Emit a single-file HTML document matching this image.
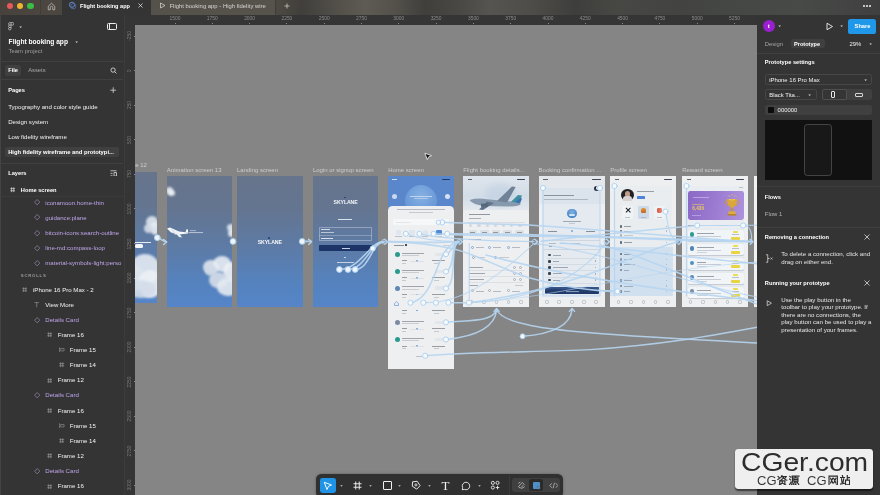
<!DOCTYPE html>
<html>
<head>
<meta charset="utf-8">
<title>Flight booking app</title>
<style>
*{box-sizing:border-box;margin:0;padding:0}
html,body{width:880px;height:495px;overflow:hidden;background:#858585}
body{font-family:"Liberation Sans",sans-serif;font-size:6.1px;color:#fff;position:relative;-webkit-font-smoothing:antialiased}
.abs{position:absolute}
.t{position:absolute;white-space:nowrap;line-height:8px;height:8px;margin-top:-4px;color:#f2f2f2}
.b{font-weight:700;font-size:5.7px;color:#fff}
.g{color:#a8a8a8}
.p{color:#bfa6ec}
#titlebar{left:0;top:0;width:880px;height:14.5px;background:linear-gradient(90deg,#48423c 0px,#4b4640 45px,#4c4842 280px,#413f3b 302px,#54514b 340px,#5e5b54 365px,#54514b 395px,#403f3c 425px,#4a4844 460px,#565450 489px,#4e4d49 530px,#3e3e3c 575px,#474744 616px,#434442 680px,#454745 728px,#484a48 799px,#3f3f3f 880px)}
#lpanel{left:0;top:14.5px;width:124px;height:481px;background:#343434;border-left:1px solid #444}
#rpanel{left:756.6px;top:14.5px;width:123.5px;height:481px;background:#343434}
#hruler{left:124px;top:14.5px;width:633px;height:10px;background:#353535}
#vruler{left:124px;top:14.5px;width:11px;height:481px;background:#353535;border-left:1px solid #3c3c3c}
.sep{position:absolute;height:1px;background:#404040}
.rt{position:absolute;top:15.9px;width:30px;margin-left:-15px;text-align:center;font-size:4.9px;line-height:6px;color:#8c8c8c}
.rk{position:absolute;top:23.2px;width:1px;height:1.3px;background:#8c8c8c;margin-left:-.5px}
.vt{position:absolute;left:125px;width:10px;height:30px;margin-top:-15px}
.vt span{position:absolute;left:5px;top:15px;font-size:4.9px;line-height:6px;color:#7a7a7a;transform:translate(-50%,-50%) rotate(-90deg);white-space:nowrap}
</style>
</head>
<body>
<div id="root" style="position:absolute;left:0;top:0;width:880px;height:495px;overflow:hidden;will-change:transform">
<!-- ======= CANVAS ======= -->
<div id="canvas" class="abs" style="left:135px;top:24.5px;width:622px;height:471px;background:#858585;overflow:hidden">
<div class="abs" style="left:-135px;top:-24.5px;width:880px;height:495px">
<style>
.fl{position:absolute;white-space:nowrap;font-size:6px;line-height:8px;height:8px;margin-top:-4px;color:#cdcdcd}
.fr{position:absolute;overflow:hidden}
.sky{background:linear-gradient(180deg,#67748c 0%,#647590 25%,#5d7ba6 55%,#5582bd 80%,#5585c8 100%)}
.app{background:#eeeff1}
.cl{position:absolute;border-radius:50%;background:#e3e9f1;filter:blur(.8px);opacity:.9}
.ln{position:absolute;height:.8px;background:#9aa0a8;opacity:.6}
.dot{position:absolute;border-radius:50%}
</style>
<div class="fl" style="left:135.2px;top:165px">e 12</div>
<div class="fl" style="left:166.8px;top:169.6px">Animation screen 13</div>
<div class="fl" style="left:237px;top:169.6px">Landing screen</div>
<div class="fl" style="left:312.9px;top:169.6px">Login or signup screen</div>
<div class="fl" style="left:388.2px;top:169.6px">Home screen</div>
<div class="fl" style="left:463.3px;top:169.6px">Flight booking details...</div>
<div class="fl" style="left:538.6px;top:169.6px">Booking confirmation ...</div>
<div class="fl" style="left:610.2px;top:169.6px">Profile screen</div>
<div class="fl" style="left:682.2px;top:169.6px">Reward screen</div>
<div class="fr sky" style="left:100px;top:172px;width:57px;height:130.5px">
<div class="cl" style="left:46px;top:44px;width:12px;height:12px;background:#dfe6ef"></div><div class="cl" style="left:50px;top:50px;width:10px;height:13px;background:#e6ecf3"></div><div class="cl" style="left:44px;top:52px;width:9px;height:9px;background:#d5deea"></div><div class="cl" style="left:30px;top:82px;width:30px;height:30px;background:#e4eaf2"></div><div class="cl" style="left:20px;top:92px;width:24px;height:28px;background:#dde5ee"></div><div class="cl" style="left:38px;top:98px;width:24px;height:28px;background:#edf1f6"></div><div class="cl" style="left:26px;top:108px;width:30px;height:18px;background:#d3dde9"></div>
<div class="abs" style="left:35px;top:69.6px;width:16px;height:.8px;background:#e8edf3"></div>
<div class="abs" style="left:35px;top:72px;width:8px;height:3.6px;border-radius:1.5px;background:#f4f6f9"></div>
</div>
<div class="fr sky" style="left:166.8px;top:176px;width:65.7px;height:131px">
<div class="cl" style="left:-1px;top:11px;width:7px;height:7px;background:#e4eaf2"></div><div class="cl" style="left:1px;top:13.5px;width:7px;height:6px;background:#eef2f6"></div><div class="cl" style="left:60px;top:48px;width:8px;height:7px;background:#e0e7f0"></div><div class="cl" style="left:61.5px;top:53px;width:7px;height:8px;background:#e9eef4"></div><div class="cl" style="left:36px;top:84px;width:16px;height:14px;background:#dfe6ef"></div><div class="cl" style="left:46px;top:80px;width:18px;height:16px;background:#e6ecf3"></div><div class="cl" style="left:56px;top:86px;width:16px;height:20px;background:#edf1f6"></div><div class="cl" style="left:42px;top:96px;width:18px;height:16px;background:#d6dfea"></div><div class="cl" style="left:50px;top:102px;width:22px;height:18px;background:#e5ebf2"></div><div class="cl" style="left:38px;top:90px;width:12px;height:10px;background:#cfd9e6"></div>
<svg class="abs" style="left:0;top:49px" width="40" height="14" viewBox="0 0 40 14"><path d="M0 3.5 L3 2.6 L12 6.4 L21 7.4 L21 8.6 L12 9.6 L4 7.4 Z" fill="#f7f8fa"/><path d="M6 5 L12 12 L15 12.4 L11 6.6 Z" fill="#eef1f5"/><path d="M3 4 L8 9.6 L10 9.8 L6.5 5 Z" fill="#dfe5ec"/><path d="M18.5 7.2 L19.5 4.2 L21 4.4 L21 7.6 Z" fill="#f7f8fa"/><path d="M21.5 7.6 H36" stroke="#e4e9f0" stroke-width=".7"/><path d="M23 5.6 H29" stroke="#d7dee8" stroke-width=".6"/></svg>
</div>
<div class="fr sky" style="left:237px;top:176px;width:65.5px;height:131px">
<div class="abs" style="left:0;width:65.5px;top:63.2px;text-align:center;font-size:5.2px;line-height:6px;font-weight:700;color:#f4f6fa;letter-spacing:-.1px">SKYLANE</div>
<div class="abs" style="left:31.2px;top:61.4px;width:1.6px;height:1.6px;border-radius:50%;background:#27407a"></div>
</div>
<div class="fr sky" style="left:312.9px;top:176px;width:65.4px;height:131px">
<div class="abs" style="left:0;width:65.4px;top:22.6px;text-align:center;font-size:5.2px;line-height:6px;font-weight:700;color:#f4f6fa;letter-spacing:-.1px">SKYLANE</div>
<div class="abs" style="left:31.6px;top:20.6px;width:1.6px;height:1.6px;border-radius:50%;background:#27407a"></div>
<div class="abs" style="left:25.5px;top:43px;width:14px;height:1px;background:#e8ecf3;opacity:.9"></div>
<div class="abs" style="left:6.2px;top:51.3px;width:53.3px;height:13.6px;border:.6px solid rgba(225,232,244,.38);border-radius:.8px"></div>
<div class="abs" style="left:6.2px;top:59.1px;width:53.3px;height:.6px;background:rgba(225,232,244,.3)"></div>
<div class="abs" style="left:8px;top:53.4px;width:9px;height:.8px;background:#e6ebf3;opacity:.85"></div>
<div class="abs" style="left:8px;top:56px;width:13px;height:.8px;background:#c9d3e3;opacity:.85"></div>
<div class="abs" style="left:8px;top:61.8px;width:12px;height:.9px;background:#e6ebf3;opacity:.9"></div>
<div class="abs" style="left:6.2px;top:69.2px;width:53.3px;height:6px;border-radius:.8px;background:#1d3468"></div>
<div class="abs" style="left:29px;top:71.8px;width:8px;height:.8px;background:#c8d2e6"></div>
<div class="abs" style="left:31.6px;top:81.2px;width:2px;height:.7px;background:#dfe6f0;opacity:.8"></div>
<div class="abs" style="left:24px;top:86px;width:17px;height:.8px;background:#dfe6f0;opacity:.8"></div>
</div>
<div class="fr app" style="left:388.2px;top:176px;width:66.2px;height:192.8px;background:#5a86cb">
<div class="abs" style="left:17px;top:9px;width:32px;height:32px;border-radius:50%;background:radial-gradient(circle at 50% 35%,#86b0e3,#6b9ad8 60%,#5f8dd0)"></div>
<div class="abs" style="left:22px;top:19.6px;width:22px;height:1px;background:#cfe0f5;opacity:.8"></div>
<div class="abs" style="left:26px;top:22.4px;width:14px;height:.8px;background:#b9d0ee;opacity:.8"></div>
<div class="abs" style="left:4px;top:2.8px;width:5px;height:.9px;background:#e6eefa;opacity:.85"></div>
<div class="abs" style="left:54px;top:2.6px;width:8px;height:1.2px;border-radius:.6px;background:#1a2a4a;opacity:.85"></div>
<div class="abs" style="left:3.4px;top:18.2px;width:5.2px;height:5.2px;border-radius:50%;background:#c9d8ee"></div>
<div class="abs" style="left:56.6px;top:18.2px;width:5.2px;height:5.2px;border-radius:50%;background:#d6e2f3"></div>
<div class="abs" style="left:0;top:29.6px;width:66.2px;height:170px;border-radius:4.5px 4.5px 0 0;background:#eeeff1"></div>
<div class="ln" style="left:9px;top:33px;width:48px;background:#8f96a3;height:.9px"></div>
<div class="ln" style="left:21px;top:36px;width:24px;background:#a9afb9"></div>
<div class="abs" style="left:5px;top:43.2px;width:56px;height:6.2px;border-radius:1.2px;background:#f6f7f8"></div>
<div class="ln" style="left:8px;top:46px;width:14px;background:#d5d8dd"></div>
<div class="abs" style="left:7.6px;top:53.6px;width:5.6px;height:5.2px;border-radius:1.2px;background:#dfe6ee"></div>
<div class="ln" style="left:7.0px;top:60.4px;width:6.4px;background:#9aa1ab;height:.7px"></div>
<div class="abs" style="left:21px;top:53.6px;width:5.6px;height:5.2px;border-radius:1.2px;background:#dfe6ee"></div>
<div class="ln" style="left:20.4px;top:60.4px;width:6.4px;background:#9aa1ab;height:.7px"></div>
<div class="abs" style="left:34.5px;top:53.6px;width:5.6px;height:5.2px;border-radius:1.2px;background:#dfe6ee"></div>
<div class="ln" style="left:33.9px;top:60.4px;width:6.4px;background:#9aa1ab;height:.7px"></div>
<div class="abs" style="left:48px;top:53.6px;width:5.6px;height:5.2px;border-radius:1.2px;background:#4f8ad8"></div>
<div class="ln" style="left:47.4px;top:60.4px;width:6.4px;background:#9aa1ab;height:.7px"></div>
<div class="ln" style="left:5.6px;top:68.8px;width:10px;background:#4b525e;height:1px"></div>
<div class="abs" style="left:16.6px;top:68px;width:2px;height:2.4px;border-radius:.5px;background:#39404b"></div>
<div class="ln" style="left:55px;top:69px;width:6px;background:#b6bbc4"></div>
<div class="dot" style="left:7.2px;top:75.7px;width:5px;height:5px;background:#2a9a8c"></div>
<div class="ln" style="left:14px;top:76.60000000000001px;width:22px;background:#6c7380;height:.9px"></div>
<div class="ln" style="left:14px;top:79.10000000000001px;width:17px;background:#b0b5be;height:.7px"></div>
<div class="abs" style="left:46.5px;top:76.60000000000001px;width:11px;height:3.4px;border-radius:1px;background:#e2e5e9"></div>
<div class="ln" style="left:14px;top:84.2px;width:5px;background:#5f6672;height:.9px"></div>
<div class="ln" style="left:14px;top:86.8px;width:4px;background:#aab0b9;height:.7px"></div>
<div class="dot" style="left:28px;top:83.8px;width:1.8px;height:1.8px;background:#6f9fdc"></div>
<div class="ln" style="left:22px;top:84.60000000000001px;width:14px;background:#d4d8de;height:.5px"></div>
<div class="ln" style="left:44px;top:84.2px;width:13px;background:#5f6672;height:.9px"></div>
<div class="ln" style="left:46px;top:86.8px;width:5px;background:#aab0b9;height:.7px"></div>
<div class="dot" style="left:7.2px;top:92.7px;width:5px;height:5px;background:#2a9a8c"></div>
<div class="ln" style="left:14px;top:93.60000000000001px;width:22px;background:#6c7380;height:.9px"></div>
<div class="ln" style="left:14px;top:96.10000000000001px;width:17px;background:#b0b5be;height:.7px"></div>
<div class="abs" style="left:46.5px;top:93.60000000000001px;width:11px;height:3.4px;border-radius:1px;background:#e2e5e9"></div>
<div class="ln" style="left:14px;top:101.2px;width:5px;background:#5f6672;height:.9px"></div>
<div class="ln" style="left:14px;top:103.8px;width:4px;background:#aab0b9;height:.7px"></div>
<div class="dot" style="left:28px;top:100.8px;width:1.8px;height:1.8px;background:#6f9fdc"></div>
<div class="ln" style="left:22px;top:101.60000000000001px;width:14px;background:#d4d8de;height:.5px"></div>
<div class="ln" style="left:44px;top:101.2px;width:13px;background:#5f6672;height:.9px"></div>
<div class="ln" style="left:46px;top:103.8px;width:5px;background:#aab0b9;height:.7px"></div>
<div class="dot" style="left:7.2px;top:109.5px;width:5px;height:5px;background:#5f86b4"></div>
<div class="ln" style="left:14px;top:110.4px;width:22px;background:#6c7380;height:.9px"></div>
<div class="ln" style="left:14px;top:112.9px;width:17px;background:#b0b5be;height:.7px"></div>
<div class="abs" style="left:46.5px;top:110.4px;width:11px;height:3.4px;border-radius:1px;background:#e2e5e9"></div>
<div class="ln" style="left:14px;top:118px;width:5px;background:#5f6672;height:.9px"></div>
<div class="ln" style="left:14px;top:120.6px;width:4px;background:#aab0b9;height:.7px"></div>
<div class="dot" style="left:28px;top:117.6px;width:1.8px;height:1.8px;background:#6f9fdc"></div>
<div class="ln" style="left:22px;top:118.4px;width:14px;background:#d4d8de;height:.5px"></div>
<div class="ln" style="left:44px;top:118px;width:13px;background:#5f6672;height:.9px"></div>
<div class="ln" style="left:46px;top:120.6px;width:5px;background:#aab0b9;height:.7px"></div>
<svg class="abs" style="left:5.6px;top:124.6px" width="5" height="5" viewBox="0 0 10 10"><path d="M1 5 L5 1.4 L9 5 V9 H1 Z" fill="none" stroke="#5b8fd6" stroke-width="1.3"/></svg>
<div class="ln" style="left:14px;top:134px;width:5px;background:#5f6672;height:.9px"></div><div class="ln" style="left:14px;top:136.6px;width:4px;background:#aab0b9;height:.7px"></div><div class="dot" style="left:28px;top:133.6px;width:1.8px;height:1.8px;background:#6f9fdc"></div><div class="ln" style="left:44px;top:134px;width:13px;background:#5f6672;height:.9px"></div><div class="ln" style="left:46px;top:136.6px;width:5px;background:#aab0b9;height:.7px"></div>
<div class="dot" style="left:7.2px;top:143.9px;width:5px;height:5px;background:#7d8aa3"></div>
<div class="ln" style="left:14px;top:144.8px;width:22px;background:#6c7380;height:.9px"></div>
<div class="ln" style="left:14px;top:147.3px;width:17px;background:#b0b5be;height:.7px"></div>
<div class="abs" style="left:46.5px;top:144.8px;width:11px;height:3.4px;border-radius:1px;background:#e2e5e9"></div>
<div class="ln" style="left:14px;top:152.4px;width:5px;background:#5f6672;height:.9px"></div>
<div class="ln" style="left:14px;top:155.0px;width:4px;background:#aab0b9;height:.7px"></div>
<div class="dot" style="left:28px;top:152.0px;width:1.8px;height:1.8px;background:#6f9fdc"></div>
<div class="ln" style="left:22px;top:152.8px;width:14px;background:#d4d8de;height:.5px"></div>
<div class="ln" style="left:44px;top:152.4px;width:13px;background:#5f6672;height:.9px"></div>
<div class="ln" style="left:46px;top:155.0px;width:5px;background:#aab0b9;height:.7px"></div>
<div class="dot" style="left:7.2px;top:161.0px;width:5px;height:5px;background:#2a9a8c"></div>
<div class="ln" style="left:14px;top:161.9px;width:22px;background:#6c7380;height:.9px"></div>
<div class="ln" style="left:14px;top:164.4px;width:17px;background:#b0b5be;height:.7px"></div>
<div class="abs" style="left:46.5px;top:161.9px;width:11px;height:3.4px;border-radius:1px;background:#e2e5e9"></div>
<div class="ln" style="left:14px;top:169.5px;width:5px;background:#5f6672;height:.9px"></div>
<div class="ln" style="left:14px;top:172.1px;width:4px;background:#aab0b9;height:.7px"></div>
<div class="dot" style="left:28px;top:169.1px;width:1.8px;height:1.8px;background:#6f9fdc"></div>
<div class="ln" style="left:22px;top:169.9px;width:14px;background:#d4d8de;height:.5px"></div>
<div class="ln" style="left:44px;top:169.5px;width:13px;background:#5f6672;height:.9px"></div>
<div class="ln" style="left:46px;top:172.1px;width:5px;background:#aab0b9;height:.7px"></div>
<div class="ln" style="left:28px;top:179.6px;width:6px;background:#9aa1ab;height:.8px"></div>
</div>
<div class="fr app" style="left:463.3px;top:176px;width:66px;height:131.2px">
<div class="abs" style="left:0;top:0;width:66px;height:36px;background:linear-gradient(180deg,#dfe5ec,#d3dde8 55%,#e4e9ee)"></div>
<div class="abs" style="left:22px;top:8px;width:30px;height:22px;border-radius:50%;background:#c4d3e3;filter:blur(3px);opacity:.8"></div>
<svg class="abs" style="left:4px;top:6px" width="58" height="30" viewBox="0 0 58 30"><path d="M2.5 18 Q10 15.6 20 17.2 L44 19.6 Q52 20.6 54 22 Q52 24.4 44 24.4 L18 24 Q6 23 2.5 18 Z" fill="#8799ad"/><path d="M30 19 L45 4.5 L48.6 5 L40 20.6 Z" fill="#6f8298"/><path d="M20 19.5 L12 27.6 L16 28 L27 21 Z" fill="#5f7288"/><path d="M44 19.8 L51 13 L55 13.4 L52 21 Z" fill="#3f8f9d"/><path d="M48 20 L53.4 16 L55 16.4 L53 21.4 Z" fill="#3c6fb4"/><path d="M14 21.6 h7 v3.2 h-7 z" fill="#55677c"/></svg>
<div class="abs" style="left:0;top:34px;width:66px;height:98px;border-radius:3px 3px 0 0;background:#eeeff1"></div>
<div class="abs" style="left:4.4px;top:2.9px;width:4.6px;height:.9px;background:#3b4150;opacity:.8"></div>
<div class="abs" style="left:53.6px;top:2.6px;width:8.4px;height:1.3px;border-radius:.6px;background:#22283a;opacity:.85"></div>
<div class="ln" style="left:5.6px;top:38.2px;width:21px;background:#565d6a;height:1px"></div>
<div class="ln" style="left:5.6px;top:42px;width:12px;background:#7e8591;height:.9px"></div>
<div class="abs" style="left:4.6px;top:45.6px;width:57px;height:.5px;background:#d9dce1"></div>
<div class="abs" style="left:6.0px;top:48.2px;width:3.2px;height:3px;border-radius:1.5px;background:#d2d7de"></div>
<div class="abs" style="left:14.2px;top:48.2px;width:3.2px;height:3px;border-radius:1.5px;background:#d2d7de"></div>
<div class="abs" style="left:22.4px;top:48.2px;width:3.2px;height:3px;border-radius:1.5px;background:#d2d7de"></div>
<div class="abs" style="left:30.599999999999998px;top:48.2px;width:3.2px;height:3px;border-radius:1.5px;background:#d2d7de"></div>
<div class="abs" style="left:38.8px;top:48.2px;width:3.2px;height:3px;border-radius:1.5px;background:#d2d7de"></div>
<div class="abs" style="left:47.0px;top:48.2px;width:3.2px;height:3px;border-radius:1.5px;background:#d2d7de"></div>
<div class="abs" style="left:55.199999999999996px;top:48.2px;width:3.2px;height:3px;border-radius:1.5px;background:#d2d7de"></div>
<div class="abs" style="left:5.4px;top:54.4px;width:8.6px;height:3.2px;border-radius:.8px;background:#dde0e5"></div><div class="ln" style="left:7.0px;top:55.6px;width:5px;background:#5f6672;height:.9px"></div>
<div class="abs" style="left:17.0px;top:54.4px;width:8.6px;height:3.2px;border-radius:.8px;background:#dde0e5"></div><div class="ln" style="left:18.6px;top:55.6px;width:5px;background:#5f6672;height:.9px"></div>
<div class="abs" style="left:28.6px;top:54.4px;width:8.6px;height:3.2px;border-radius:.8px;background:#dde0e5"></div><div class="ln" style="left:30.2px;top:55.6px;width:5px;background:#5f6672;height:.9px"></div>
<div class="abs" style="left:40.199999999999996px;top:54.4px;width:8.6px;height:3.2px;border-radius:.8px;background:#dde0e5"></div><div class="ln" style="left:41.8px;top:55.6px;width:5px;background:#5f6672;height:.9px"></div>
<div class="abs" style="left:51.8px;top:54.4px;width:8.6px;height:3.2px;border-radius:.8px;background:#dde0e5"></div><div class="ln" style="left:53.4px;top:55.6px;width:5px;background:#5f6672;height:.9px"></div>
<div class="ln" style="left:5.6px;top:63.2px;width:12px;background:#565d6a;height:.9px"></div>
<div class="abs" style="left:8px;top:69.6px;width:3px;height:3px;border-radius:50%;border:.6px solid #7fa6d6"></div><div class="ln" style="left:12.4px;top:70.8px;width:8px;background:#8f96a3;height:.8px"></div>
<div class="abs" style="left:25px;top:69.6px;width:3px;height:3px;border-radius:50%;border:.6px solid #7fa6d6"></div><div class="ln" style="left:29.4px;top:70.8px;width:8px;background:#8f96a3;height:.8px"></div>
<div class="abs" style="left:44px;top:69.6px;width:3px;height:3px;border-radius:50%;border:.6px solid #7fa6d6"></div><div class="ln" style="left:48.4px;top:70.8px;width:8px;background:#8f96a3;height:.8px"></div>
<div class="abs" style="left:9px;top:79.6px;width:3px;height:3px;border-radius:50%;border:.6px solid #9ab"></div><div class="ln" style="left:14px;top:80.8px;width:8px;background:#a9afb9;height:.8px"></div>
<div class="abs" style="left:31px;top:79.6px;width:3px;height:3px;border-radius:50%;border:.6px solid #7fa6d6"></div><div class="ln" style="left:36px;top:80.8px;width:10px;background:#a9afb9;height:.8px"></div>
<div class="ln" style="left:5.6px;top:91px;width:14px;background:#6c7380;height:.9px"></div>
<div class="abs" style="left:50px;top:89.8px;width:3px;height:3px;border-radius:50%;border:.6px solid #a9afb9"></div><div class="abs" style="left:55.6px;top:89.8px;width:3px;height:3px;border-radius:50%;border:.6px solid #a9afb9"></div>
<div class="abs" style="left:4.6px;top:94px;width:57px;height:.4px;background:#dcdfe3"></div>
<div class="ln" style="left:5.6px;top:97.2px;width:16px;background:#6c7380;height:.9px"></div>
<div class="abs" style="left:50px;top:96.0px;width:3px;height:3px;border-radius:50%;border:.6px solid #a9afb9"></div><div class="abs" style="left:55.6px;top:96.0px;width:3px;height:3px;border-radius:50%;border:.6px solid #a9afb9"></div>
<div class="abs" style="left:4.6px;top:100.2px;width:57px;height:.4px;background:#dcdfe3"></div>
<div class="ln" style="left:5.6px;top:103.4px;width:15px;background:#6c7380;height:.9px"></div>
<div class="abs" style="left:50px;top:102.2px;width:3px;height:3px;border-radius:50%;border:.6px solid #a9afb9"></div><div class="abs" style="left:55.6px;top:102.2px;width:3px;height:3px;border-radius:50%;border:.6px solid #a9afb9"></div>
<div class="abs" style="left:4.6px;top:106.4px;width:57px;height:.4px;background:#dcdfe3"></div>
<div class="ln" style="left:5.6px;top:109.4px;width:9px;background:#6c7380;height:.9px"></div>
<div class="ln" style="left:52px;top:109.4px;width:8px;background:#a9afb9;height:.8px"></div>
<div class="abs" style="left:8px;top:113.4px;width:3px;height:3px;border-radius:50%;border:.6px solid #a9afb9"></div><div class="ln" style="left:12.4px;top:114.6px;width:8px;background:#8f96a3;height:.8px"></div>
<div class="abs" style="left:25px;top:113.4px;width:3px;height:3px;border-radius:50%;border:.6px solid #a9afb9"></div><div class="ln" style="left:29.4px;top:114.6px;width:8px;background:#8f96a3;height:.8px"></div>
<div class="abs" style="left:44px;top:113.4px;width:3px;height:3px;border-radius:50%;border:.6px solid #a9afb9"></div><div class="ln" style="left:48.4px;top:114.6px;width:8px;background:#8f96a3;height:.8px"></div>
<div class="abs" style="left:6.6000000000000005px;top:124px;width:3.6px;height:3.6px;border-radius:1.2px;border:.7px solid #8f96a3;opacity:.45"></div>
<div class="abs" style="left:18.8px;top:124px;width:3.6px;height:3.6px;border-radius:1.2px;border:.7px solid #8f96a3;opacity:.45"></div>
<div class="abs" style="left:31.400000000000002px;top:124px;width:3.6px;height:3.6px;border-radius:1.2px;border:.7px solid #8f96a3;opacity:.45"></div>
<div class="abs" style="left:43.400000000000006px;top:124px;width:3.6px;height:3.6px;border-radius:1.2px;border:.7px solid #8f96a3;opacity:.45"></div>
<div class="abs" style="left:55.800000000000004px;top:124px;width:3.6px;height:3.6px;border-radius:1.2px;border:.7px solid #8f96a3;opacity:.45"></div>
</div>
<div class="fr app" style="left:538.6px;top:176px;width:66.2px;height:131.2px">
<div class="abs" style="left:0;top:0;width:66.2px;height:28.4px;background:#e4e7ec"></div>
<div class="abs" style="left:4.4px;top:2.9px;width:4.6px;height:.9px;background:#3b4150;opacity:.8"></div>
<div class="abs" style="left:53.6px;top:2.6px;width:8.4px;height:1.3px;border-radius:.6px;background:#22283a;opacity:.85"></div>
<div class="dot" style="left:55px;top:9.6px;width:5.8px;height:5.8px;background:#1d2430"></div><div class="dot" style="left:57.4px;top:10px;width:3.4px;height:4px;background:#e9ecf0"></div>
<div class="ln" style="left:5.4px;top:18.8px;width:30px;background:#4e5562;height:1.1px"></div>
<div class="ln" style="left:5.4px;top:22.8px;width:44px;background:#8f96a3;height:.8px"></div>
<div class="dot" style="left:28.8px;top:33px;width:9.2px;height:9.2px;background:radial-gradient(circle at 50% 35%,#7fb0e4,#3f7fc4 70%)"></div><div class="abs" style="left:30px;top:38.2px;width:6.8px;height:1.6px;border-radius:1px;background:#e9f0f8;opacity:.9"></div>
<div class="ln" style="left:24px;top:44.8px;width:18px;background:#6c7380;height:.8px"></div>
<div class="ln" style="left:30px;top:47.2px;width:6px;background:#b0b5be;height:.7px"></div>
<div class="ln" style="left:9px;top:55px;width:9px;background:#3d4451;height:1.3px"></div>
<div class="ln" style="left:47px;top:55px;width:9px;background:#3d4451;height:1.3px"></div>
<div class="dot" style="left:32.4px;top:54.2px;width:2px;height:2px;background:#6f9fdc"></div>
<div class="ln" style="left:10px;top:59.4px;width:6px;background:#aab0b9;height:.7px"></div><div class="ln" style="left:30px;top:59.8px;width:7px;background:#aab0b9;height:.7px"></div><div class="ln" style="left:48px;top:59.4px;width:7px;background:#aab0b9;height:.7px"></div>
<div class="abs" style="left:4.6px;top:64.4px;width:57px;height:.5px;background:#d5d9de"></div>
<div class="ln" style="left:10px;top:67px;width:7px;background:#8f96a3;height:.8px"></div><div class="ln" style="left:22px;top:67px;width:5px;background:#8f96a3;height:.8px"></div><div class="ln" style="left:32px;top:67px;width:9px;background:#8f96a3;height:.8px"></div>
<div class="ln" style="left:10px;top:70.4px;width:3px;background:#5f6672;height:.9px"></div>
<div class="abs" style="left:4.6px;top:73.4px;width:57px;height:.5px;background:#d5d9de"></div>
<div class="abs" style="left:9.8px;top:77.8px;width:3px;height:2.6px;border-radius:1px;background:#2f3643"></div><div class="ln" style="left:14.4px;top:78.7px;width:8px;background:#6c7380;height:.9px"></div><div class="abs" style="left:55.6px;top:78.2px;width:1.4px;height:1.8px;border-right:.5px solid #a9afb9"></div>
<div class="abs" style="left:8px;top:81.9px;width:50px;height:.4px;background:#dcdfe3"></div>
<div class="abs" style="left:9.8px;top:84.0px;width:3px;height:2.6px;border-radius:1px;background:#2f3643"></div><div class="ln" style="left:14.4px;top:84.9px;width:6px;background:#6c7380;height:.9px"></div><div class="abs" style="left:55.6px;top:84.4px;width:1.4px;height:1.8px;border-right:.5px solid #a9afb9"></div>
<div class="abs" style="left:8px;top:88.10000000000001px;width:50px;height:.4px;background:#dcdfe3"></div>
<div class="abs" style="left:9.8px;top:90.2px;width:3px;height:2.6px;border-radius:1px;background:#2f3643"></div><div class="ln" style="left:14.4px;top:91.10000000000001px;width:15px;background:#6c7380;height:.9px"></div><div class="abs" style="left:55.6px;top:90.60000000000001px;width:1.4px;height:1.8px;border-right:.5px solid #a9afb9"></div>
<div class="abs" style="left:8px;top:94.30000000000001px;width:50px;height:.4px;background:#dcdfe3"></div>
<div class="abs" style="left:9.8px;top:96.39999999999999px;width:3px;height:2.6px;border-radius:1px;background:#2f3643"></div><div class="ln" style="left:14.4px;top:97.3px;width:9px;background:#6c7380;height:.9px"></div><div class="abs" style="left:55.6px;top:96.8px;width:1.4px;height:1.8px;border-right:.5px solid #a9afb9"></div>
<div class="abs" style="left:8px;top:100.5px;width:50px;height:.4px;background:#dcdfe3"></div>
<div class="abs" style="left:9.8px;top:102.6px;width:3px;height:2.6px;border-radius:1px;background:#2f3643"></div><div class="ln" style="left:14.4px;top:103.5px;width:7px;background:#6c7380;height:.9px"></div><div class="abs" style="left:55.6px;top:103.0px;width:1.4px;height:1.8px;border-right:.5px solid #a9afb9"></div>
<div class="abs" style="left:8px;top:106.7px;width:50px;height:.4px;background:#dcdfe3"></div>
<div class="abs" style="left:6px;top:111px;width:54px;height:7px;border-radius:1px;background:linear-gradient(180deg,#1c3566,#14295a)"></div>
<svg class="abs" style="left:6px;top:111px" width="54" height="7" viewBox="0 0 54 7"><path d="M0 3 Q8 0.6 16 2 T32 1.6 T54 2.4 V0 H0 Z" fill="#34518a" opacity=".7"/><path d="M21 4.6 H34" stroke="#aebbd6" stroke-width=".8"/></svg>
<div class="abs" style="left:6.6000000000000005px;top:124px;width:3.6px;height:3.6px;border-radius:1.2px;border:.7px solid #8f96a3;opacity:.45"></div>
<div class="abs" style="left:18.8px;top:124px;width:3.6px;height:3.6px;border-radius:1.2px;border:.7px solid #8f96a3;opacity:.45"></div>
<div class="abs" style="left:31.400000000000002px;top:124px;width:3.6px;height:3.6px;border-radius:1.2px;border:.7px solid #8f96a3;opacity:.45"></div>
<div class="abs" style="left:43.400000000000006px;top:124px;width:3.6px;height:3.6px;border-radius:1.2px;border:.7px solid #8f96a3;opacity:.45"></div>
<div class="abs" style="left:55.800000000000004px;top:124px;width:3.6px;height:3.6px;border-radius:1.2px;border:.7px solid #8f96a3;opacity:.45"></div>
</div>
<div class="fr app" style="left:610.2px;top:176px;width:66px;height:131.2px">
<div class="abs" style="left:4.4px;top:2.9px;width:4.6px;height:.9px;background:#3b4150;opacity:.8"></div>
<div class="abs" style="left:53.6px;top:2.6px;width:8.4px;height:1.3px;border-radius:.6px;background:#22283a;opacity:.85"></div>
<div class="dot" style="left:10.6px;top:12.8px;width:13px;height:12.6px;background:#1b1b1d"></div>
<div class="abs" style="left:14.6px;top:15.4px;width:5px;height:5.4px;border-radius:50%;background:#c49a86"></div><div class="abs" style="left:12.8px;top:20.4px;width:8.6px;height:5px;border-radius:3px 3px 0 0;background:#d9d4d2"></div>
<div class="ln" style="left:27px;top:15px;width:17px;background:#5f6672;height:.9px"></div>
<div class="abs" style="left:27px;top:20.4px;width:8px;height:3px;border-radius:.6px;background:#4c7fd9"></div>
<div class="abs" style="left:12px;top:29.6px;width:11px;height:13.6px;border-radius:1.2px;background:#f4f5f6"></div>
<div class="ln" style="left:15px;top:40.6px;width:5px;background:#9aa1ab;height:.7px"></div>
<div class="abs" style="left:27.8px;top:29.6px;width:11px;height:13.6px;border-radius:1.2px;background:#cfdaea"></div>
<div class="ln" style="left:30.8px;top:40.6px;width:5px;background:#9aa1ab;height:.7px"></div>
<div class="abs" style="left:43.6px;top:29.6px;width:11px;height:13.6px;border-radius:1.2px;background:#f4f5f6"></div>
<div class="ln" style="left:46.6px;top:40.6px;width:5px;background:#9aa1ab;height:.7px"></div>
<svg class="abs" style="left:14.4px;top:31.4px" width="6.4" height="6.4" viewBox="0 0 10 10"><path d="M1.5 1.5 L8.5 8.5 M8.5 1.5 L1.5 8.5" stroke="#15181e" stroke-width="1.6"/></svg>
<div class="abs" style="left:30.6px;top:32px;width:5.4px;height:4.8px;border-radius:2px 2px 1px 1px;background:linear-gradient(180deg,#e59a2a,#c9601e)"></div>
<div class="abs" style="left:46.4px;top:31.6px;width:5.4px;height:5.6px;border-radius:1.4px;background:linear-gradient(90deg,#d9503c,#e98a7a)"></div>
<div class="abs" style="left:9.4px;top:49.4px;width:2.4px;height:2.4px;border-radius:.8px;border:.5px solid #5f6672"></div><div class="ln" style="left:13.4px;top:50.4px;width:7px;background:#5f6672;height:.85px"></div>
<div class="abs" style="left:56px;top:49.8px;width:1.3px;height:1.6px;border-right:.5px solid #b4b9c1"></div>
<div class="abs" style="left:9.4px;top:54px;width:2.4px;height:2.4px;border-radius:.8px;border:.5px solid #5f6672"></div><div class="ln" style="left:13.4px;top:55px;width:7px;background:#5f6672;height:.85px"></div>
<div class="abs" style="left:56px;top:54.4px;width:1.3px;height:1.6px;border-right:.5px solid #b4b9c1"></div>
<div class="abs" style="left:9.4px;top:58.2px;width:2.4px;height:2.4px;border-radius:.8px;border:.5px solid #aab0b9"></div><div class="ln" style="left:13.4px;top:59.2px;width:9px;background:#aab0b9;height:.85px"></div>
<div class="abs" style="left:56px;top:58.6px;width:1.3px;height:1.6px;border-right:.5px solid #b4b9c1"></div>
<div class="abs" style="left:9.4px;top:65.2px;width:2.4px;height:2.4px;border-radius:.8px;border:.5px solid #5f6672"></div><div class="ln" style="left:13.4px;top:66.2px;width:8px;background:#5f6672;height:.85px"></div>
<div class="abs" style="left:56px;top:65.60000000000001px;width:1.3px;height:1.6px;border-right:.5px solid #b4b9c1"></div>
<div class="abs" style="left:9.4px;top:77px;width:2.4px;height:2.4px;border-radius:.8px;border:.5px solid #2f3643"></div><div class="ln" style="left:13.4px;top:78px;width:7px;background:#2f3643;height:.85px"></div>
<div class="abs" style="left:56px;top:77.4px;width:1.3px;height:1.6px;border-right:.5px solid #b4b9c1"></div>
<div class="abs" style="left:9.4px;top:82.2px;width:2.4px;height:2.4px;border-radius:.8px;border:.5px solid #7e8591"></div><div class="ln" style="left:13.4px;top:83.2px;width:8px;background:#7e8591;height:.85px"></div>
<div class="abs" style="left:56px;top:82.60000000000001px;width:1.3px;height:1.6px;border-right:.5px solid #b4b9c1"></div>
<div class="abs" style="left:9.4px;top:87.4px;width:2.4px;height:2.4px;border-radius:.8px;border:.5px solid #5f6672"></div><div class="ln" style="left:13.4px;top:88.4px;width:11px;background:#5f6672;height:.85px"></div>
<div class="abs" style="left:56px;top:87.80000000000001px;width:1.3px;height:1.6px;border-right:.5px solid #b4b9c1"></div>
<div class="abs" style="left:9.4px;top:92.6px;width:2.4px;height:2.4px;border-radius:.8px;border:.5px solid #5f6672"></div><div class="ln" style="left:13.4px;top:93.6px;width:5px;background:#5f6672;height:.85px"></div>
<div class="abs" style="left:56px;top:93.0px;width:1.3px;height:1.6px;border-right:.5px solid #b4b9c1"></div>
<div class="abs" style="left:9.4px;top:103.4px;width:2.4px;height:2.4px;border-radius:.8px;border:.5px solid #5f6672"></div><div class="ln" style="left:13.4px;top:104.4px;width:8px;background:#5f6672;height:.85px"></div>
<div class="abs" style="left:56px;top:103.80000000000001px;width:1.3px;height:1.6px;border-right:.5px solid #b4b9c1"></div>
<div class="abs" style="left:9.4px;top:108.6px;width:2.4px;height:2.4px;border-radius:.8px;border:.5px solid #5f6672"></div><div class="ln" style="left:13.4px;top:109.6px;width:9px;background:#5f6672;height:.85px"></div>
<div class="abs" style="left:56px;top:109.0px;width:1.3px;height:1.6px;border-right:.5px solid #b4b9c1"></div>
<div class="abs" style="left:9.4px;top:114.2px;width:2.4px;height:2.4px;border-radius:.8px;border:.5px solid #5f6672"></div><div class="ln" style="left:13.4px;top:115.2px;width:6px;background:#5f6672;height:.85px"></div>
<div class="abs" style="left:56px;top:114.60000000000001px;width:1.3px;height:1.6px;border-right:.5px solid #b4b9c1"></div>
<div class="abs" style="left:0px;top:71.4px;width:63px;height:48.6px;background:rgba(160,200,238,.34)"></div>
<div class="abs" style="left:6.6000000000000005px;top:124px;width:3.6px;height:3.6px;border-radius:1.2px;border:.7px solid #8f96a3;opacity:.45"></div>
<div class="abs" style="left:18.8px;top:124px;width:3.6px;height:3.6px;border-radius:1.2px;border:.7px solid #8f96a3;opacity:.45"></div>
<div class="abs" style="left:31.400000000000002px;top:124px;width:3.6px;height:3.6px;border-radius:1.2px;border:.7px solid #8f96a3;opacity:.45"></div>
<div class="abs" style="left:43.400000000000006px;top:124px;width:3.6px;height:3.6px;border-radius:1.2px;border:.7px solid #8f96a3;opacity:.45"></div>
<div class="abs" style="left:55.800000000000004px;top:124px;width:3.6px;height:3.6px;border-radius:1.2px;border:.7px solid #8f96a3;opacity:.45"></div>
</div>
<div class="fr app" style="left:682.2px;top:176px;width:66px;height:131.2px">
<div class="abs" style="left:4.4px;top:2.9px;width:4.6px;height:.9px;background:#3b4150;opacity:.8"></div>
<div class="abs" style="left:53.6px;top:2.6px;width:8.4px;height:1.3px;border-radius:.6px;background:#22283a;opacity:.85"></div>
<div class="ln" style="left:57px;top:11px;width:4px;background:#9aa1ab;height:.8px"></div>
<div class="abs" style="left:5.6px;top:15.4px;width:56px;height:28.8px;border-radius:2.4px;background:linear-gradient(100deg,#8a63c4 0%,#9a75cf 45%,#b08fdc 100%)"></div>
<div class="ln" style="left:11px;top:21px;width:16px;background:#d8c8f0;height:.9px"></div>
<div class="ln" style="left:10px;top:27.8px;width:12px;background:#e8c45a;height:.8px"></div>
<div class="abs" style="left:10px;top:30.2px;font-size:4.6px;line-height:5px;font-weight:700;color:#f4cf4a;letter-spacing:.1px">6,430</div>
<div class="ln" style="left:10px;top:38.6px;width:9px;background:#cdb8ec;height:.7px"></div>
<svg class="abs" style="left:42px;top:17.4px" width="16" height="24" viewBox="0 0 16 24"><path d="M3 6 H13 Q13 14 8 15 Q3 14 3 6 Z" fill="#e0a52e"/><path d="M3 7.4 Q0.4 8 1.4 10.6 Q2.2 12 4 12" fill="none" stroke="#d39a28" stroke-width="1"/><path d="M13 7.4 Q15.6 8 14.6 10.6 Q13.8 12 12 12" fill="none" stroke="#d39a28" stroke-width="1"/><path d="M7 15 h2 v3.6 h-2 z" fill="#c98f22"/><path d="M4.4 18.4 h7.2 v2.8 h-7.2 z" fill="#e3ab37"/><path d="M3.6 21 h8.8 v1.6 h-8.8 z" fill="#b97f1c"/><path d="M5 6.4 q3 1.2 6 0" stroke="#f3cf6a" stroke-width=".8" fill="none"/><path d="M4 3.6 l1 -1 l1 1 M7.4 2.4 l.8 -1 l.8 1 M10.4 3.6 l1 -1 l1 1" stroke="#e8c460" stroke-width=".7" fill="none"/></svg>
<div class="ln" style="left:5.6px;top:49px;width:7px;background:#5f6672;height:.9px"></div><div class="ln" style="left:36px;top:49px;width:9px;background:#9aa1ab;height:.8px"></div><div class="ln" style="left:56px;top:49px;width:5px;background:#9aa1ab;height:.8px"></div>
<div class="abs" style="left:5.6px;top:53.6px;width:56px;height:11.6px;border-radius:1.4px;background:#f7f8f9;box-shadow:0 .4px .8px rgba(60,70,90,.22)"></div>
<div class="dot" style="left:7.6px;top:56.199999999999996px;width:4.6px;height:4.6px;background:#2a9a8c"></div>
<div class="ln" style="left:14.4px;top:57.0px;width:17px;background:#5f6672;height:.9px"></div>
<div class="ln" style="left:14.4px;top:59.8px;width:24px;background:#aab0b9;height:.7px"></div><div class="ln" style="left:14.4px;top:61.8px;width:10px;background:#b9bec6;height:.7px"></div>
<div class="abs" style="left:51px;top:55.199999999999996px;width:5px;height:1.6px;border-radius:.8px;background:#f0dc4a"></div>
<div class="ln" style="left:49.6px;top:58.199999999999996px;width:7px;background:#8f96a3;height:.7px"></div>
<div class="abs" style="left:48.6px;top:60.6px;width:9.6px;height:3px;border-radius:.9px;background:#eed638"></div>
<div class="abs" style="left:5.6px;top:67.8px;width:56px;height:11.6px;border-radius:1.4px;background:#f7f8f9;box-shadow:0 .4px .8px rgba(60,70,90,.22)"></div>
<div class="dot" style="left:7.6px;top:70.39999999999999px;width:4.6px;height:4.6px;background:#4c7fb4"></div>
<div class="ln" style="left:14.4px;top:71.19999999999999px;width:17px;background:#5f6672;height:.9px"></div>
<div class="ln" style="left:14.4px;top:74.0px;width:24px;background:#aab0b9;height:.7px"></div><div class="ln" style="left:14.4px;top:76.0px;width:10px;background:#b9bec6;height:.7px"></div>
<div class="abs" style="left:51px;top:69.39999999999999px;width:5px;height:1.6px;border-radius:.8px;background:#f0dc4a"></div>
<div class="ln" style="left:49.6px;top:72.39999999999999px;width:7px;background:#8f96a3;height:.7px"></div>
<div class="abs" style="left:48.6px;top:74.8px;width:9.6px;height:3px;border-radius:.9px;background:#eed638"></div>
<div class="abs" style="left:5.6px;top:82.2px;width:56px;height:11.6px;border-radius:1.4px;background:#f7f8f9;box-shadow:0 .4px .8px rgba(60,70,90,.22)"></div>
<div class="dot" style="left:7.6px;top:84.8px;width:4.6px;height:4.6px;background:#4a8fc0"></div>
<div class="ln" style="left:14.4px;top:85.6px;width:9px;background:#5f6672;height:.9px"></div>
<div class="ln" style="left:14.4px;top:88.4px;width:24px;background:#aab0b9;height:.7px"></div><div class="ln" style="left:14.4px;top:90.4px;width:10px;background:#b9bec6;height:.7px"></div>
<div class="abs" style="left:51px;top:83.8px;width:5px;height:1.6px;border-radius:.8px;background:#f0dc4a"></div>
<div class="ln" style="left:49.6px;top:86.8px;width:7px;background:#8f96a3;height:.7px"></div>
<div class="abs" style="left:48.6px;top:89.2px;width:9.6px;height:3px;border-radius:.9px;background:#eed638"></div>
<div class="abs" style="left:5.6px;top:96.60000000000001px;width:56px;height:11.6px;border-radius:1.4px;background:#f7f8f9;box-shadow:0 .4px .8px rgba(60,70,90,.22)"></div>
<div class="dot" style="left:7.6px;top:99.2px;width:4.6px;height:4.6px;background:#5a86b8"></div>
<div class="ln" style="left:14.4px;top:100.0px;width:17px;background:#5f6672;height:.9px"></div>
<div class="ln" style="left:14.4px;top:102.80000000000001px;width:24px;background:#aab0b9;height:.7px"></div><div class="ln" style="left:14.4px;top:104.80000000000001px;width:10px;background:#b9bec6;height:.7px"></div>
<div class="abs" style="left:51px;top:98.2px;width:5px;height:1.6px;border-radius:.8px;background:#f0dc4a"></div>
<div class="ln" style="left:49.6px;top:101.2px;width:7px;background:#8f96a3;height:.7px"></div>
<div class="abs" style="left:48.6px;top:103.60000000000001px;width:9.6px;height:3px;border-radius:.9px;background:#eed638"></div>
<div class="abs" style="left:5.6px;top:110.8px;width:56px;height:11px;border-radius:1.4px;background:#f7f8f9;box-shadow:0 .4px .8px rgba(60,70,90,.22)"></div>
<div class="dot" style="left:7.6px;top:113.39999999999999px;width:4.6px;height:4.6px;background:#7d8aa3"></div>
<div class="ln" style="left:14.4px;top:114.19999999999999px;width:14px;background:#5f6672;height:.9px"></div>
<div class="ln" style="left:14.4px;top:117.0px;width:24px;background:#aab0b9;height:.7px"></div><div class="ln" style="left:14.4px;top:119.0px;width:10px;background:#b9bec6;height:.7px"></div>
<div class="abs" style="left:51px;top:112.39999999999999px;width:5px;height:1.6px;border-radius:.8px;background:#f0dc4a"></div>
<div class="ln" style="left:49.6px;top:115.39999999999999px;width:7px;background:#8f96a3;height:.7px"></div>
<div class="abs" style="left:48.6px;top:117.8px;width:9.6px;height:3px;border-radius:.9px;background:#eed638"></div>
<div class="abs" style="left:6.6000000000000005px;top:124px;width:3.6px;height:3.6px;border-radius:1.2px;border:.7px solid #8f96a3;opacity:.45"></div>
<div class="abs" style="left:18.8px;top:124px;width:3.6px;height:3.6px;border-radius:1.2px;border:.7px solid #8f96a3;opacity:.45"></div>
<div class="abs" style="left:31.400000000000002px;top:124px;width:3.6px;height:3.6px;border-radius:1.2px;border:.7px solid #8f96a3;opacity:.45"></div>
<div class="abs" style="left:43.400000000000006px;top:124px;width:3.6px;height:3.6px;border-radius:1.2px;border:.7px solid #8f96a3;opacity:.45"></div>
<div class="abs" style="left:55.800000000000004px;top:124px;width:3.6px;height:3.6px;border-radius:1.2px;border:.7px solid #8f96a3;opacity:.45"></div>
</div>
<div class="abs" style="left:753.8px;top:176px;width:4px;height:131.2px;background:#f0f1f3"></div>
<!--F6-->
<!--F7-->
<!--F8-->
<svg class="abs" style="left:0;top:0" width="880" height="495" viewBox="0 0 880 495" fill="none" stroke="#b6d5f1" stroke-linecap="round" stroke-linejoin="round">
<rect x="543" y="188" width="57" height="108" rx="1.2" fill="rgba(150,198,240,0.1)" stroke="none"/>
<path d="M543 188 V296" stroke-width="1.2" opacity=".9"/>
<path d="M600 188 V296 M543 296 H600" stroke-width="1.1" opacity=".8"/>
<rect x="614.5" y="186" width="57.5" height="110" rx="1.2" fill="rgba(150,198,240,0.04)" stroke="none"/>
<path d="M614.5 186 V296" stroke-width="1.2" opacity=".9"/>
<rect x="686.5" y="186" width="57.5" height="110" rx="1.2" fill="rgba(150,198,240,0.06)" stroke="none"/>
<path d="M686.5 186 V296" stroke-width="1.2" opacity=".9"/>
<path d="M157.3 237.7 C161 238 162 241.8 166.6 242" stroke-width="1.6" opacity="0.9"/>
<path d="M302.4 241.4 H311" stroke-width="1.6" opacity="0.9"/>
<path d="M339.4 269.5 C351 269.5 358 262 371 248.4 C375 244 379 241.9 384 241.6" stroke-width="1.6" opacity="0.9"/>
<path d="M347.8 269.5 C357 269.5 363 262 372.6 248.8 C376 244.4 380 242 384 241.6" stroke-width="1.6" opacity="0.9"/>
<path d="M355.2 269.5 C363 269.5 367 262 374.2 249.2 C377 244.8 380.6 242.2 384 241.6" stroke-width="1.6" opacity="0.9"/>
<path d="M442.5 222.3 C470 223.6 500 224 529 225 C580 228 660 236 751 241.6" stroke-width="1.6" opacity="0.9"/>
<path d="M447.3 233.8 C520 233 640 238 751 241.6" stroke-width="1.5" opacity="0.9"/>
<path d="M433.6 233.8 C470 236.6 560 235 640 238.6 C690 240.6 720 241.2 751 241.6" stroke-width="1.6" opacity="0.9"/>
<path d="M419.5 233.8 C440 238 480 241 534 241.6" stroke-width="1.2" opacity="0.9"/>
<path d="M405.9 233.8 C420 239 440 241.4 459 241.6" stroke-width="1.2" opacity="0.9"/>
<path d="M388.4 241.6 C410 241.6 430 243.6 459 241.6" stroke-width="1.6" opacity="0.9"/>
<path d="M446 254.2 C452 253 452 243 459 241.6" stroke-width="1.6" opacity="0.9"/>
<path d="M446 271.6 C455 268 450 245 459 241.6" stroke-width="1.6" opacity="0.9"/>
<path d="M446 288.4 C458 282 449 246 459 241.6" stroke-width="1.6" opacity="0.9"/>
<path d="M410.5 302.7 C432 300 436 262 446 250 C450 245 454 242.4 459 241.6" stroke-width="1.6" opacity="0.9"/>
<path d="M448.4 302.7 H469" stroke-width="1.6" opacity="0.9"/>
<path d="M423.4 302.7 C440 302 470 304 534 243.4" stroke-width="1.1" opacity="0.75"/>
<path d="M469.3 243.6 V302.7" stroke-width="1.1" opacity="0.9"/>
<path d="M697.3 225.5 C668 228 610 233.6 541 241.2" stroke-width="1.6" opacity="0.9"/>
<path d="M697.3 225.5 H743.2" stroke-width="1.1" opacity="0.9"/>
<path d="M743.2 225.5 C750 225.6 752 232 751.6 241" stroke-width="1.1" opacity="0.9"/>
<path d="M743.2 225.2 H757" stroke-width="1.1" opacity="0.9"/>
<path d="M617.5 291.4 C590 291 560 286 529 277.7 C500 268 475 254 454 249 C430 243.6 410 242 388.4 241.6" stroke-width="1.6" opacity="0.9"/>
<path d="M600 245 C640 254 690 280 757 304" stroke-width="1.6" opacity="0.9"/>
<path d="M560 243 C610 246 670 256 757 263.6" stroke-width="1.6" opacity="0.9"/>
<path d="M486 255 C541 270 620 286 757 300.6" stroke-width="1.6" opacity="0.9"/>
<path d="M534 243.6 C600 250 690 285 757 297" stroke-width="1.1" opacity="0.8"/>
<path d="M469 302.7 C520 296 560 286 602.7 269 C640 256 660 246 678 241.8" stroke-width="1.6" opacity="0.9"/>
<path d="M469 302.7 C530 300 580 280 606 242.4" stroke-width="1.1" opacity="0.85"/>
<path d="M469 302.7 C560 298 640 270 757 262" stroke-width="1.0" opacity="0.6"/>
<path d="M598.4 290.4 L617.5 291.4" stroke-width="1.1" opacity="0.9"/>
<path d="M665.5 211.6 C668 220 667 236 678 241.6" stroke-width="1.1" opacity="0.9"/>
<path d="M446 322.3 C470 320 492 322 496.6 310" stroke-width="1.6" opacity="0.9"/>
<path d="M446 339.5 C480 336 495 326 496.6 310" stroke-width="1.6" opacity="0.9"/>
<path d="M496.6 310 C505 326 560 330 590 332.8 C640 337 700 340 757 343" stroke-width="1.4" opacity="0.9"/>
<path d="M425.2 355.8 C470 352 540 352 590 349.6 C660 345 710 336 757 327.2" stroke-width="1.4" opacity="0.9"/>
<path d="M522.6 336.3 C552 334 570 326 572 310" stroke-width="1.6" opacity="0.9"/>
<path d="M163.6 239.4 L166.6 242 L163.6 244.6" stroke-width="1.3"/>
<path d="M308.6 239.20000000000002 L311.6 241.8 L308.6 244.4" stroke-width="1.3"/>
<path d="M384.6 239.20000000000002 L387.6 241.8 L384.6 244.4" stroke-width="1.3"/>
<path d="M459.6 239.20000000000002 L462.6 241.8 L459.6 244.4" stroke-width="1.3"/>
<path d="M534.8 239.20000000000002 L537.8 241.8 L534.8 244.4" stroke-width="1.3"/>
<path d="M606.6 239.20000000000002 L609.6 241.8 L606.6 244.4" stroke-width="1.3"/>
<path d="M678.6 239.20000000000002 L681.6 241.8 L678.6 244.4" stroke-width="1.3"/>
<path d="M750 239.20000000000002 L753 241.8 L750 244.4" stroke-width="1.3"/>
<path d="M494.0 311.4 L496.6 308.4 L499.20000000000005 311.4" stroke-width="1.3"/>
<path d="M569.4 311.4 L572 308.4 L574.6 311.4" stroke-width="1.3"/>
<circle cx="157.3" cy="237.7" r="2.9" fill="#f0f5fb" stroke="#a9cff0" stroke-width=".9"/>
<circle cx="233" cy="241.4" r="2.9" fill="#f0f5fb" stroke="#a9cff0" stroke-width=".9"/>
<circle cx="302.2" cy="241.4" r="2.9" fill="#f0f5fb" stroke="#a9cff0" stroke-width=".9"/>
<circle cx="339.4" cy="269.5" r="2.9" fill="#f0f5fb" stroke="#a9cff0" stroke-width=".9"/>
<circle cx="348" cy="269.5" r="2.9" fill="#f0f5fb" stroke="#a9cff0" stroke-width=".9"/>
<circle cx="355.2" cy="269.5" r="2.9" fill="#f0f5fb" stroke="#a9cff0" stroke-width=".9"/>
<circle cx="442.3" cy="222.3" r="2.6" fill="#f6fafd" stroke="#a9cff0" stroke-width=".9"/>
<circle cx="438.4" cy="222.3" r="2.2" fill="#f6fafd" stroke="#a9cff0" stroke-width=".9"/>
<circle cx="372.8" cy="248.4" r="2.6" fill="#f6fafd" stroke="#a9cff0" stroke-width=".9"/>
<circle cx="405.9" cy="233.8" r="2.6" fill="#f6fafd" stroke="#a9cff0" stroke-width=".9"/>
<circle cx="419.5" cy="233.8" r="2.6" fill="#f6fafd" stroke="#a9cff0" stroke-width=".9"/>
<circle cx="433.6" cy="233.8" r="2.6" fill="#f6fafd" stroke="#a9cff0" stroke-width=".9"/>
<circle cx="447.3" cy="233.8" r="2.6" fill="#f6fafd" stroke="#a9cff0" stroke-width=".9"/>
<circle cx="446" cy="254.2" r="2.6" fill="#f6fafd" stroke="#a9cff0" stroke-width=".9"/>
<circle cx="446" cy="271.6" r="2.6" fill="#f6fafd" stroke="#a9cff0" stroke-width=".9"/>
<circle cx="446" cy="288.4" r="2.6" fill="#f6fafd" stroke="#a9cff0" stroke-width=".9"/>
<circle cx="446" cy="322.3" r="2.6" fill="#f6fafd" stroke="#a9cff0" stroke-width=".9"/>
<circle cx="446" cy="339.5" r="2.6" fill="#f6fafd" stroke="#a9cff0" stroke-width=".9"/>
<circle cx="410.5" cy="302.7" r="2.6" fill="#f6fafd" stroke="#a9cff0" stroke-width=".9"/>
<circle cx="423.4" cy="302.7" r="2.6" fill="#f6fafd" stroke="#a9cff0" stroke-width=".9"/>
<circle cx="435.9" cy="302.7" r="2.6" fill="#f6fafd" stroke="#a9cff0" stroke-width=".9"/>
<circle cx="448.4" cy="302.7" r="2.6" fill="#f6fafd" stroke="#a9cff0" stroke-width=".9"/>
<circle cx="425.2" cy="355.8" r="2.6" fill="#f6fafd" stroke="#a9cff0" stroke-width=".9"/>
<circle cx="469" cy="302.7" r="2.6" fill="#f6fafd" stroke="#a9cff0" stroke-width=".9"/>
<circle cx="543" cy="188" r="2.6" fill="#f6fafd" stroke="#a9cff0" stroke-width=".9"/>
<circle cx="600" cy="188" r="2.6" fill="#f6fafd" stroke="#a9cff0" stroke-width=".9"/>
<circle cx="614.5" cy="186" r="2.6" fill="#f6fafd" stroke="#a9cff0" stroke-width=".9"/>
<circle cx="665.5" cy="211.6" r="2.6" fill="#f6fafd" stroke="#a9cff0" stroke-width=".9"/>
<circle cx="617.5" cy="291.4" r="2.6" fill="#f6fafd" stroke="#a9cff0" stroke-width=".9"/>
<circle cx="686.5" cy="186" r="2.6" fill="#f6fafd" stroke="#a9cff0" stroke-width=".9"/>
<circle cx="697.3" cy="225.5" r="2.6" fill="#f6fafd" stroke="#a9cff0" stroke-width=".9"/>
<circle cx="743.2" cy="225.5" r="2.6" fill="#f6fafd" stroke="#a9cff0" stroke-width=".9"/>
<circle cx="522.6" cy="336.3" r="2.5" fill="#f4f8fc" stroke="#a9cff0" stroke-width=".9"/>
<circle cx="384" cy="241.7" r="2.3" fill="none" stroke="#a9cff0" stroke-width=".9"/>
<circle cx="459.2" cy="241.7" r="2.3" fill="none" stroke="#a9cff0" stroke-width=".9"/>
<circle cx="534.2" cy="241.7" r="2.3" fill="none" stroke="#a9cff0" stroke-width=".9"/>
<circle cx="606.2" cy="241.7" r="2.3" fill="none" stroke="#a9cff0" stroke-width=".9"/>
<circle cx="678.4" cy="241.7" r="2.3" fill="none" stroke="#a9cff0" stroke-width=".9"/>
</svg>
<svg class="abs" style="left:422px;top:150px" width="12" height="12" viewBox="0 0 12 12"><path d="M2.9 3.2 L9.6 5.7 L6.6 6.9 L5.3 9.6 Z" fill="#0a0a0a" stroke="#e4e4e4" stroke-width=".9" stroke-linejoin="round"/></svg>
</div>
</div>

<!-- ======= RULERS ======= -->
<div id="hruler" class="abs">
</div>
<div id="vruler" class="abs"></div>
<div class="rt" style="left:175.0px">1500</div><div class="rk" style="left:175.0px"></div>
<div class="rt" style="left:212.3px">1750</div><div class="rk" style="left:212.3px"></div>
<div class="rt" style="left:249.6px">2000</div><div class="rk" style="left:249.6px"></div>
<div class="rt" style="left:286.9px">2250</div><div class="rk" style="left:286.9px"></div>
<div class="rt" style="left:324.2px">2500</div><div class="rk" style="left:324.2px"></div>
<div class="rt" style="left:361.5px">2750</div><div class="rk" style="left:361.5px"></div>
<div class="rt" style="left:398.8px">3000</div><div class="rk" style="left:398.8px"></div>
<div class="rt" style="left:436.1px">3250</div><div class="rk" style="left:436.1px"></div>
<div class="rt" style="left:473.4px">3500</div><div class="rk" style="left:473.4px"></div>
<div class="rt" style="left:510.7px">3750</div><div class="rk" style="left:510.7px"></div>
<div class="rt" style="left:548.0px">4000</div><div class="rk" style="left:548.0px"></div>
<div class="rt" style="left:585.3px">4250</div><div class="rk" style="left:585.3px"></div>
<div class="rt" style="left:622.6px">4500</div><div class="rk" style="left:622.6px"></div>
<div class="rt" style="left:659.9px">4750</div><div class="rk" style="left:659.9px"></div>
<div class="rt" style="left:697.2px">5000</div><div class="rk" style="left:697.2px"></div>
<div class="rt" style="left:734.5px">5250</div><div class="rk" style="left:734.5px"></div>
<div class="vt" style="top:36.2px"><span>-250</span></div><div class="abs" style="left:133.6px;top:35.7px;width:1.4px;height:1px;background:#8c8c8c"></div>
<div class="vt" style="top:70.8px"><span>0</span></div><div class="abs" style="left:133.6px;top:70.2px;width:1.4px;height:1px;background:#8c8c8c"></div>
<div class="vt" style="top:105.3px"><span>250</span></div><div class="abs" style="left:133.6px;top:104.8px;width:1.4px;height:1px;background:#8c8c8c"></div>
<div class="vt" style="top:139.8px"><span>500</span></div><div class="abs" style="left:133.6px;top:139.3px;width:1.4px;height:1px;background:#8c8c8c"></div>
<div class="vt" style="top:174.4px"><span>750</span></div><div class="abs" style="left:133.6px;top:173.9px;width:1.4px;height:1px;background:#8c8c8c"></div>
<div class="vt" style="top:208.9px"><span>1000</span></div><div class="abs" style="left:133.6px;top:208.4px;width:1.4px;height:1px;background:#8c8c8c"></div>
<div class="vt" style="top:243.5px"><span>1250</span></div><div class="abs" style="left:133.6px;top:243.0px;width:1.4px;height:1px;background:#8c8c8c"></div>
<div class="vt" style="top:278.0px"><span>1500</span></div><div class="abs" style="left:133.6px;top:277.5px;width:1.4px;height:1px;background:#8c8c8c"></div>
<div class="vt" style="top:312.6px"><span>1750</span></div><div class="abs" style="left:133.6px;top:312.1px;width:1.4px;height:1px;background:#8c8c8c"></div>
<div class="vt" style="top:347.1px"><span>2000</span></div><div class="abs" style="left:133.6px;top:346.6px;width:1.4px;height:1px;background:#8c8c8c"></div>
<div class="vt" style="top:381.7px"><span>2250</span></div><div class="abs" style="left:133.6px;top:381.2px;width:1.4px;height:1px;background:#8c8c8c"></div>
<div class="vt" style="top:416.2px"><span>2500</span></div><div class="abs" style="left:133.6px;top:415.7px;width:1.4px;height:1px;background:#8c8c8c"></div>
<div class="vt" style="top:450.8px"><span>2750</span></div><div class="abs" style="left:133.6px;top:450.3px;width:1.4px;height:1px;background:#8c8c8c"></div>
<div class="vt" style="top:485.3px"><span>3000</span></div><div class="abs" style="left:133.6px;top:484.8px;width:1.4px;height:1px;background:#8c8c8c"></div>

<!-- ======= TITLE BAR ======= -->
<div id="titlebar" class="abs"></div>
<!-- traffic lights -->
<div class="abs" style="left:6.8px;top:2.6px;width:6.6px;height:6.6px;border-radius:50%;background:#e8585a"></div>
<div class="abs" style="left:16.9px;top:2.6px;width:6.6px;height:6.6px;border-radius:50%;background:#eeb52e"></div>
<div class="abs" style="left:27.2px;top:2.6px;width:6.6px;height:6.6px;border-radius:50%;background:#3abf45"></div>
<!-- separators -->
<div class="abs" style="left:40px;top:0;width:1px;height:14px;background:rgba(0,0,0,.12)"></div>
<!-- home icon -->
<svg class="abs" style="left:46.5px;top:1.5px" width="9" height="9" viewBox="0 0 18 18"><path d="M2.5 8.5 L9 2.5 L15.5 8.5 V15.5 H11.5 V11 a2.5 2.5 0 0 0 -5 0 V15.5 H2.5 Z" fill="none" stroke="#b9b7b3" stroke-width="1.7" stroke-linejoin="round"/></svg>
<!-- active tab -->
<div class="abs" style="left:62px;top:0;width:88.5px;height:14.6px;background:#343434"></div>
<svg class="abs" style="left:68px;top:1.2px" width="9" height="9" viewBox="0 0 18 18"><circle cx="8" cy="7.5" r="5.2" fill="none" stroke="#6c8fd0" stroke-width="1.8"/><circle cx="10.5" cy="10.5" r="5.2" fill="none" stroke="#4f6fb0" stroke-width="1.8"/></svg>
<div class="t b" style="left:80px;top:5.8px;font-size:5.6px">Flight booking app</div>
<svg class="abs" style="left:137.5px;top:3.3px" width="5" height="5" viewBox="0 0 10 10"><path d="M1 1 L9 9 M9 1 L1 9" stroke="#e6e6e6" stroke-width="1.5"/></svg>
<!-- second tab -->
<div class="abs" style="left:150.5px;top:0;width:124px;height:14.6px;background:rgba(120,125,115,.22)"></div>
<div class="abs" style="left:274.5px;top:0;width:1px;height:14px;background:rgba(0,0,0,.15)"></div>
<svg class="abs" style="left:159px;top:2.4px" width="7" height="7" viewBox="0 0 14 14"><path d="M3 2 L12 7 L3 12 Z" fill="none" stroke="#d0cfcc" stroke-width="1.6" stroke-linejoin="round"/></svg>
<div class="t" style="left:169.5px;top:5.8px;font-size:5.9px;color:#d6d5d2">Flight booking app - High fidelity wire</div>
<!-- plus -->
<svg class="abs" style="left:283.5px;top:2.8px" width="6" height="6" viewBox="0 0 12 12"><path d="M6 1 V11 M1 6 H11" stroke="#cfcecb" stroke-width="1.5"/></svg>
<!-- dots -->
<div class="abs" style="left:863.3px;top:5.2px;width:1.6px;height:1.6px;border-radius:50%;background:#e0e0e0;box-shadow:3px 0 0 #e0e0e0,6px 0 0 #e0e0e0"></div>


<!-- ======= LEFT PANEL ======= -->
<div id="lpanel" class="abs"></div>
<svg class="abs" style="left:8.4px;top:22px" width="5.8" height="8.6" viewBox="0 0 13 19"><path d="M4 1.2 H10.5 M4 1.2 a2.8 2.8 0 0 0 0 5.6 H10.5 M4 6.8 a2.8 2.8 0 0 0 0 5.6 H6.8 M6.8 1.2 V15 a2.8 2.8 0 1 1 -2.8 -2.8 M10.5 1.2 a2.8 2.8 0 0 1 0 5.6" fill="none" stroke="#d6d6d6" stroke-width="1.5"/></svg>
<svg class="abs" style="left:19px;top:25.5px" width="3.4" height="2.4" viewBox="0 0 7 5"><path d="M0.5 0.8 L3.5 4 L6.5 0.8 Z" fill="#d0d0d0"/></svg>
<div class="abs" style="left:106.5px;top:22.6px;width:10px;height:7px;border:1px solid #ededed;border-radius:1.4px"></div><div class="abs" style="left:109.3px;top:23px;width:1px;height:6px;background:#ededed"></div>
<div class="t b" style="left:8.6px;top:41.8px;font-size:6.65px;line-height:9px;height:9px;margin-top:-4.5px">Flight booking app</div>
<svg class="abs" style="left:75px;top:40.8px" width="3.4" height="2.4" viewBox="0 0 7 5"><path d="M0.5 0.8 L3.5 4 L6.5 0.8 Z" fill="#d0d0d0"/></svg>
<div class="t g" style="left:8.6px;top:51px;font-size:5.9px;color:#9d9d9d">Team project</div>
<div class="sep" style="left:0;top:60.5px;width:123px"></div>
<div class="abs" style="left:5.4px;top:65px;width:15.4px;height:10.6px;border-radius:2.2px;background:#404040"></div>
<div class="t b" style="left:8.2px;top:70.2px">File</div>
<div class="t g" style="left:28.2px;top:70.2px;font-size:5.8px;color:#a6a6a6">Assets</div>
<svg class="abs" style="left:109.6px;top:66.6px" width="7.2" height="7.2" viewBox="0 0 14 14"><circle cx="6" cy="6" r="4.2" fill="none" stroke="#ececec" stroke-width="1.5"/><path d="M9.2 9.2 L12.6 12.6" stroke="#ececec" stroke-width="1.5"/></svg>
<div class="sep" style="left:0;top:79.3px;width:123px"></div>
<div class="t b" style="left:8.2px;top:90px">Pages</div>
<svg class="abs" style="left:110.2px;top:86.8px" width="6.4" height="6.4" viewBox="0 0 12 12"><path d="M6 0.5 V11.5 M0.5 6 H11.5" stroke="#ececec" stroke-width="1.3"/></svg>
<div class="t" style="left:8.2px;top:106.9px">Typography and color style guide</div>
<div class="t" style="left:8.2px;top:121.9px">Design system</div>
<div class="t" style="left:8.2px;top:136.9px">Low fidelity wireframe</div>
<div class="abs" style="left:5.4px;top:147px;width:113.6px;height:10.4px;border-radius:2.2px;background:#404040"></div>
<div class="t" style="left:8.2px;top:152.3px;color:#fff;font-weight:700;font-size:5.8px">High fidelity wireframe and prototypi...</div>
<div class="sep" style="left:0;top:163.4px;width:123px"></div>
<div class="t b" style="left:8.2px;top:173.2px">Layers</div>
<svg class="abs" style="left:110px;top:169.8px" width="7" height="6.6" viewBox="0 0 14 13"><path d="M1 1.5 H13 M1 6.5 H5 M1 11.5 H5 M8 5 h5 v7 h-5 z" fill="none" stroke="#dcdcdc" stroke-width="1.6"/></svg>
<svg class="abs" style="left:9.6px;top:187.3px" width="5.4" height="5.4" viewBox="0 0 11 11"><path d="M3.3 0.5 V10.5 M7.7 0.5 V10.5 M0.5 3.3 H10.5 M0.5 7.7 H10.5" stroke="#e6e6e6" stroke-width="1.3" fill="none"/></svg>
<div class="t b" style="left:20.8px;top:190.1px">Home screen</div>
<div class="sep" style="left:0;top:196.4px;width:123px;background:#3b3b3b"></div>
<svg class="abs" style="left:33.7px;top:199.4px" width="6.4" height="6.4" viewBox="0 0 12 12"><path d="M6 1 L11 6 L6 11 L1 6 Z" fill="none" stroke="#a99bc4" stroke-width="1.15"/></svg>
<div class="t p" style="left:45.3px;top:202.6px">iconamoon.home-thin</div>
<svg class="abs" style="left:33.7px;top:214.4px" width="6.4" height="6.4" viewBox="0 0 12 12"><path d="M6 1 L11 6 L6 11 L1 6 Z" fill="none" stroke="#a99bc4" stroke-width="1.15"/></svg>
<div class="t p" style="left:45.3px;top:217.6px">guidance:plane</div>
<svg class="abs" style="left:33.7px;top:229.5px" width="6.4" height="6.4" viewBox="0 0 12 12"><path d="M6 1 L11 6 L6 11 L1 6 Z" fill="none" stroke="#a99bc4" stroke-width="1.15"/></svg>
<div class="t p" style="left:45.3px;top:232.7px">bitcoin-icons:search-outline</div>
<svg class="abs" style="left:33.7px;top:244.7px" width="6.4" height="6.4" viewBox="0 0 12 12"><path d="M6 1 L11 6 L6 11 L1 6 Z" fill="none" stroke="#a99bc4" stroke-width="1.15"/></svg>
<div class="t p" style="left:45.3px;top:247.9px">line-md:compass-loop</div>
<svg class="abs" style="left:33.7px;top:259.5px" width="6.4" height="6.4" viewBox="0 0 12 12"><path d="M6 1 L11 6 L6 11 L1 6 Z" fill="none" stroke="#a99bc4" stroke-width="1.15"/></svg>
<div class="t p" style="left:45.3px;top:262.7px">material-symbols-light:perso</div>
<svg class="abs" style="left:21.9px;top:286.9px" width="5.4" height="5.4" viewBox="0 0 11 11"><path d="M3.3 0.5 V10.5 M7.7 0.5 V10.5 M0.5 3.3 H10.5 M0.5 7.7 H10.5" stroke="#9a9a9a" stroke-width="1.3" fill="none"/></svg>
<div class="t" style="left:33px;top:289.6px">iPhone 16 Pro Max - 2</div>
<svg class="abs" style="left:34.2px;top:302.1px" width="5.4" height="5.6" viewBox="0 0 11 11"><path d="M1 1 H10 M5.5 1 V10.5" stroke="#9a9a9a" stroke-width="1.3" fill="none"/></svg>
<div class="t" style="left:45.3px;top:304.9px">View More</div>
<svg class="abs" style="left:33.7px;top:316.6px" width="6.4" height="6.4" viewBox="0 0 12 12"><path d="M6 1 L11 6 L6 11 L1 6 Z" fill="none" stroke="#a99bc4" stroke-width="1.15"/></svg>
<div class="t p" style="left:45.3px;top:319.8px">Details Card</div>
<svg class="abs" style="left:47.1px;top:332.1px" width="5.4" height="5.4" viewBox="0 0 11 11"><path d="M3.3 0.5 V10.5 M7.7 0.5 V10.5 M0.5 3.3 H10.5 M0.5 7.7 H10.5" stroke="#9a9a9a" stroke-width="1.3" fill="none"/></svg>
<div class="t" style="left:57.7px;top:334.8px">Frame 16</div>
<svg class="abs" style="left:59.0px;top:347.2px" width="5.8" height="5.4" viewBox="0 0 12 11"><path d="M1 0.5 V10.5 M3.5 3 H10.5 V8 H3.5 Z" stroke="#9a9a9a" stroke-width="1.2" fill="none"/></svg>
<div class="t" style="left:69.8px;top:349.9px">Frame 15</div>
<svg class="abs" style="left:59.2px;top:362.4px" width="5.4" height="5.4" viewBox="0 0 11 11"><path d="M3.3 0.5 V10.5 M7.7 0.5 V10.5 M0.5 3.3 H10.5 M0.5 7.7 H10.5" stroke="#9a9a9a" stroke-width="1.3" fill="none"/></svg>
<div class="t" style="left:69.8px;top:365.1px">Frame 14</div>
<svg class="abs" style="left:47.1px;top:377.5px" width="5.4" height="5.4" viewBox="0 0 11 11"><path d="M3.3 0.5 V10.5 M7.7 0.5 V10.5 M0.5 3.3 H10.5 M0.5 7.7 H10.5" stroke="#9a9a9a" stroke-width="1.3" fill="none"/></svg>
<div class="t" style="left:57.7px;top:380.2px">Frame 12</div>
<svg class="abs" style="left:33.7px;top:392.2px" width="6.4" height="6.4" viewBox="0 0 12 12"><path d="M6 1 L11 6 L6 11 L1 6 Z" fill="none" stroke="#a99bc4" stroke-width="1.15"/></svg>
<div class="t p" style="left:45.3px;top:395.4px">Details Card</div>
<svg class="abs" style="left:47.1px;top:407.9px" width="5.4" height="5.4" viewBox="0 0 11 11"><path d="M3.3 0.5 V10.5 M7.7 0.5 V10.5 M0.5 3.3 H10.5 M0.5 7.7 H10.5" stroke="#9a9a9a" stroke-width="1.3" fill="none"/></svg>
<div class="t" style="left:57.7px;top:410.6px">Frame 16</div>
<svg class="abs" style="left:59.0px;top:423.0px" width="5.8" height="5.4" viewBox="0 0 12 11"><path d="M1 0.5 V10.5 M3.5 3 H10.5 V8 H3.5 Z" stroke="#9a9a9a" stroke-width="1.2" fill="none"/></svg>
<div class="t" style="left:69.8px;top:425.7px">Frame 15</div>
<svg class="abs" style="left:59.2px;top:438.1px" width="5.4" height="5.4" viewBox="0 0 11 11"><path d="M3.3 0.5 V10.5 M7.7 0.5 V10.5 M0.5 3.3 H10.5 M0.5 7.7 H10.5" stroke="#9a9a9a" stroke-width="1.3" fill="none"/></svg>
<div class="t" style="left:69.8px;top:440.8px">Frame 14</div>
<svg class="abs" style="left:47.1px;top:453.2px" width="5.4" height="5.4" viewBox="0 0 11 11"><path d="M3.3 0.5 V10.5 M7.7 0.5 V10.5 M0.5 3.3 H10.5 M0.5 7.7 H10.5" stroke="#9a9a9a" stroke-width="1.3" fill="none"/></svg>
<div class="t" style="left:57.7px;top:455.9px">Frame 12</div>
<svg class="abs" style="left:33.7px;top:468.0px" width="6.4" height="6.4" viewBox="0 0 12 12"><path d="M6 1 L11 6 L6 11 L1 6 Z" fill="none" stroke="#a99bc4" stroke-width="1.15"/></svg>
<div class="t p" style="left:45.3px;top:471.2px">Details Card</div>
<svg class="abs" style="left:47.1px;top:483.7px" width="5.4" height="5.4" viewBox="0 0 11 11"><path d="M3.3 0.5 V10.5 M7.7 0.5 V10.5 M0.5 3.3 H10.5 M0.5 7.7 H10.5" stroke="#9a9a9a" stroke-width="1.3" fill="none"/></svg>
<div class="t" style="left:57.7px;top:486.4px">Frame 16</div>
<div class="t" style="left:20.8px;top:276.1px;font-size:4.3px;letter-spacing:.75px;color:#9a9a9a;font-weight:700">SCROLLS</div>

<!-- ======= RIGHT PANEL ======= -->
<div id="rpanel" class="abs"></div>
<div class="abs" style="left:763.3px;top:20.3px;width:11.8px;height:11.8px;border-radius:50%;background:#9a1fd0"></div>
<div class="t b" style="left:767.7px;top:26.1px;font-size:6.2px">t</div>
<svg class="abs" style="left:777.5px;top:25.2px" width="3.4" height="2.4" viewBox="0 0 7 5"><path d="M0.5 0.8 L3.5 4 L6.5 0.8 Z" fill="#d4d4d4"/></svg>
<svg class="abs" style="left:824.5px;top:21.6px" width="9" height="9" viewBox="0 0 18 18"><path d="M4 2.5 L15 9 L4 15.5 Z" fill="none" stroke="#f0f0f0" stroke-width="1.8" stroke-linejoin="round"/></svg>
<svg class="abs" style="left:839.9px;top:25.2px" width="3.4" height="2.4" viewBox="0 0 7 5"><path d="M0.5 0.8 L3.5 4 L6.5 0.8 Z" fill="#d4d4d4"/></svg>
<div class="abs" style="left:848.2px;top:18.6px;width:28.2px;height:15px;border-radius:2.6px;background:#1f98ea"></div>
<div class="t b" style="left:854.6px;top:26.2px;font-size:5.7px">Share</div>
<div class="t" style="left:764.8px;top:43.5px;color:#a4a4a4;font-size:5.9px">Design</div>
<div class="abs" style="left:790.6px;top:38.6px;width:34px;height:9.6px;border-radius:2.2px;background:#404040"></div>
<div class="t b" style="left:794px;top:43.5px;font-size:5.6px">Prototype</div>
<div class="t" style="left:849.4px;top:43.5px;font-size:5.9px;color:#f0f0f0">29%</div>
<svg class="abs" style="left:868.7px;top:42.5px" width="3.4" height="2.4" viewBox="0 0 7 5"><path d="M0.5 0.8 L3.5 4 L6.5 0.8 Z" fill="#d4d4d4"/></svg>
<div class="sep" style="left:757px;top:52.6px;width:123px"></div>
<div class="t b" style="left:764.8px;top:62.4px">Prototype settings</div>
<div class="abs" style="left:764.8px;top:73.8px;width:107.2px;height:11.2px;border-radius:2.2px;border:1px solid #474747"></div>
<div class="t" style="left:769.2px;top:79.5px;font-size:5.95px">iPhone 16 Pro Max</div>
<svg class="abs" style="left:863.6px;top:78.5px" width="3.4" height="2.4" viewBox="0 0 7 5"><path d="M0.5 0.8 L3.5 4 L6.5 0.8 Z" fill="#d4d4d4"/></svg>
<div class="abs" style="left:764.8px;top:88.8px;width:52.4px;height:11.6px;border-radius:2.2px;border:1px solid #474747"></div>
<div class="t" style="left:769.2px;top:94.8px;font-size:5.95px">Black Tita...</div>
<svg class="abs" style="left:807.9px;top:93.8px" width="3.4" height="2.4" viewBox="0 0 7 5"><path d="M0.5 0.8 L3.5 4 L6.5 0.8 Z" fill="#d4d4d4"/></svg>
<div class="abs" style="left:821.6px;top:88.8px;width:50.4px;height:11.6px;border-radius:2.2px;background:#404040"></div>
<div class="abs" style="left:822.1px;top:89.3px;width:24.6px;height:10.6px;border-radius:2px;background:#353535;border:.5px solid #505050"></div>
<div class="abs" style="left:831.2px;top:91.3px;width:4.2px;height:6.8px;border:1px solid #e6e6e6;border-radius:1px"></div>
<div class="abs" style="left:855.4px;top:92.6px;width:7.2px;height:4.2px;border:1px solid #d8d8d8;border-radius:1px"></div>
<div class="abs" style="left:764.8px;top:104.8px;width:107.2px;height:10.6px;border-radius:2.2px;background:#404040"></div>
<div class="abs" style="left:767.8px;top:107.2px;width:6.2px;height:5.8px;border-radius:.8px;background:#0c0c0c"></div>
<div class="t" style="left:777.6px;top:110px;font-size:5.95px">000000</div>
<div class="abs" style="left:764.8px;top:119.7px;width:107.2px;height:60.4px;background:#111111"></div>
<div class="abs" style="left:804.4px;top:123.6px;width:27.4px;height:52.8px;border:1px solid #444;border-radius:3.2px;background:#181818"></div>
<div class="sep" style="left:757px;top:186px;width:123px;background:#3c3c3c"></div>
<div class="t b" style="left:764.8px;top:197px">Flows</div>
<div class="t" style="left:764.8px;top:213.8px;color:#b4b4b4;font-size:5.95px">Flow 1</div>
<div class="sep" style="left:757px;top:227.3px;width:123px"></div>
<div class="t b" style="left:764.8px;top:236.8px">Removing a connection</div>
<svg class="abs" style="left:864.4px;top:233.8px" width="6" height="6" viewBox="0 0 12 12"><path d="M1 1 L11 11 M11 1 L1 11" stroke="#e8e8e8" stroke-width="1.5"/></svg>
<svg class="abs" style="left:764.8px;top:253.6px" width="10" height="9" viewBox="0 0 20 18"><path d="M2 1.5 H5.5 V16.5 H2 M5.5 9 H9" fill="none" stroke="#e0e0e0" stroke-width="1.5"/><path d="M11 7 L15 11 M15 7 L11 11" stroke="#e0e0e0" stroke-width="1.3"/></svg>
<div class="t" style="left:781.3px;top:254.4px;font-size:6.15px;color:#e6e6e6">To delete a connection, click and</div>
<div class="t" style="left:781.3px;top:262px;font-size:6.15px;color:#e6e6e6">drag on either end.</div>
<div class="t b" style="left:764.8px;top:282.9px">Running your prototype</div>
<svg class="abs" style="left:864.4px;top:279.8px" width="6" height="6" viewBox="0 0 12 12"><path d="M1 1 L11 11 M11 1 L1 11" stroke="#e8e8e8" stroke-width="1.5"/></svg>
<svg class="abs" style="left:766.2px;top:300.2px" width="6.4" height="6.4" viewBox="0 0 13 13"><path d="M2.5 1.5 L11 6.5 L2.5 11.5 Z" fill="none" stroke="#e0e0e0" stroke-width="1.5" stroke-linejoin="round"/></svg>
<div class="t" style="left:781.3px;top:299.7px;font-size:6.15px;color:#e6e6e6">Use the play button in the</div>
<div class="t" style="left:781.3px;top:307.2px;font-size:6.15px;color:#e6e6e6">toolbar to play your prototype. If</div>
<div class="t" style="left:781.3px;top:314.8px;font-size:6.15px;color:#e6e6e6">there are no connections, the</div>
<div class="t" style="left:781.3px;top:322.3px;font-size:6.15px;color:#e6e6e6">play button can be used to play a</div>
<div class="t" style="left:781.3px;top:329.9px;font-size:6.15px;color:#e6e6e6">presentation of your frames.</div>

<!-- ======= TOOLBAR ======= -->
<div class="abs" style="left:316px;top:474.3px;width:247px;height:24px;border-radius:5.5px;background:#303030;box-shadow:0 0 2.5px rgba(0,0,0,.35)"></div>
<div class="abs" style="left:320px;top:478px;width:16.2px;height:14.6px;border-radius:2.4px;background:#1f93e6"></div>
<svg class="abs" style="left:323.4px;top:480.6px" width="10" height="10" viewBox="0 0 20 20"><path d="M2.5 2.5 L17 8 L10.8 10.8 L8 17 Z" fill="none" stroke="#fff" stroke-width="1.9" stroke-linejoin="round"/></svg>
<svg class="abs" style="left:339.9px;top:484.5px" width="3" height="2.2" viewBox="0 0 7 5"><path d="M0.5 0.8 L3.5 4 L6.5 0.8 Z" fill="#c8c8c8"/></svg>
<svg class="abs" style="left:352.9px;top:481px" width="9" height="9" viewBox="0 0 18 18"><path d="M5.5 1 V17 M12.5 1 V17 M1 5.5 H17 M1 12.5 H17" stroke="#f0f0f0" stroke-width="1.9" fill="none"/></svg>
<svg class="abs" style="left:369.0px;top:484.5px" width="3" height="2.2" viewBox="0 0 7 5"><path d="M0.5 0.8 L3.5 4 L6.5 0.8 Z" fill="#c8c8c8"/></svg>
<div class="abs" style="left:382.8px;top:481.4px;width:8.8px;height:8.2px;border:1.1px solid #f0f0f0;border-radius:1px"></div>
<svg class="abs" style="left:398.4px;top:484.5px" width="3" height="2.2" viewBox="0 0 7 5"><path d="M0.5 0.8 L3.5 4 L6.5 0.8 Z" fill="#c8c8c8"/></svg>
<svg class="abs" style="left:410.6px;top:480.4px" width="10.4" height="10.4" viewBox="0 0 20 20"><path d="M3 3.5 L12 2.5 L17.5 11 L11 17.5 L2.5 12 Z" fill="none" stroke="#f0f0f0" stroke-width="1.8" stroke-linejoin="round"/><circle cx="9.5" cy="9.5" r="2" fill="none" stroke="#f0f0f0" stroke-width="1.6"/></svg>
<svg class="abs" style="left:427.5px;top:484.5px" width="3" height="2.2" viewBox="0 0 7 5"><path d="M0.5 0.8 L3.5 4 L6.5 0.8 Z" fill="#c8c8c8"/></svg>
<div class="abs" style="left:440px;top:479.2px;width:11px;text-align:center;font-family:'Liberation Serif',serif;font-size:13px;line-height:13px;color:#f0f0f0">T</div>
<svg class="abs" style="left:461.3px;top:480.6px" width="10" height="10" viewBox="0 0 20 20"><path d="M10 2.5 a7.5 7.5 0 1 1 -3.2 14.3 L2.5 17.5 L3.2 13.2 A7.5 7.5 0 0 1 10 2.5 Z" fill="none" stroke="#f0f0f0" stroke-width="1.8" stroke-linejoin="round"/></svg>
<svg class="abs" style="left:477.5px;top:484.5px" width="3" height="2.2" viewBox="0 0 7 5"><path d="M0.5 0.8 L3.5 4 L6.5 0.8 Z" fill="#c8c8c8"/></svg>
<svg class="abs" style="left:490.3px;top:480.4px" width="10.4" height="10.4" viewBox="0 0 20 20"><circle cx="5.5" cy="5.5" r="3" fill="none" stroke="#f0f0f0" stroke-width="1.7"/><circle cx="14.5" cy="5.5" r="3" fill="none" stroke="#f0f0f0" stroke-width="1.7"/><circle cx="5.5" cy="14.5" r="3" fill="none" stroke="#f0f0f0" stroke-width="1.7"/><path d="M14.5 11 V18 M11 14.5 H18" stroke="#f0f0f0" stroke-width="1.7"/></svg>
<div class="abs" style="left:508.5px;top:475px;width:1px;height:20px;background:#3a3a3a"></div>
<div class="abs" style="left:512px;top:478.3px;width:47.8px;height:13.6px;border-radius:3px;background:#404040"></div>
<svg class="abs" style="left:516.6px;top:481.2px" width="8.6" height="8.6" viewBox="0 0 18 18"><path d="M3 12 L11 3 L15 7 L7 15 Z M9 16 L16 12 M3 5 L7 2" fill="none" stroke="#b4b4b4" stroke-width="1.8" stroke-linejoin="round"/></svg>
<div class="abs" style="left:529.4px;top:479px;width:13.6px;height:12.2px;border-radius:2.2px;background:#2a2a2a"></div>
<div class="abs" style="left:533px;top:482.2px;width:6.6px;height:6.8px;border-radius:1px;background:#4f8fc8"></div>
<svg class="abs" style="left:536.6px;top:486px" width="4.4" height="4.4" viewBox="0 0 9 9"><path d="M1 1 L8 4 L5 5 L4 8 Z" fill="#8fc0ea" stroke="#2a2a2a" stroke-width=".8"/></svg>
<svg class="abs" style="left:548.6px;top:482px" width="9.6" height="7" viewBox="0 0 19 14"><path d="M5.5 2.5 L1.5 7 L5.5 11.5 M13.5 2.5 L17.5 7 L13.5 11.5 M11 1.5 L8 12.5" fill="none" stroke="#b4b4b4" stroke-width="1.7"/></svg>

<!-- ======= WATERMARK ======= -->
<div class="abs" style="left:734.8px;top:449.2px;width:137.8px;height:39.8px;border-radius:3.4px;background:#efefef;box-shadow:0 1.2px 1.5px rgba(0,0,0,.55)"></div>
<div class="abs" style="left:741.2px;top:448.4px;width:114px;height:28px;font-size:25px;line-height:28px;color:#2d2d2d;white-space:nowrap;transform-origin:0 50%;transform:scaleX(1.13)">CGer.com</div>
<div class="abs" style="left:757.1px;top:473.6px;font-size:12.4px;line-height:14px;color:#3a3a3a;white-space:nowrap;transform-origin:0 50%;transform:scaleX(1.05)">CG</div>
<div class="abs" style="left:807.1px;top:473.6px;font-size:12.4px;line-height:14px;color:#3a3a3a;white-space:nowrap;transform-origin:0 50%;transform:scaleX(1.05)">CG</div>
<svg class="abs" style="left:777.3px;top:474.9px" width="10.4" height="10.6" viewBox="0 0 10 10" fill="none" stroke="#2b2b2b" stroke-width="1.12" stroke-linecap="square"><path d="M1 1.3 L2.2 2.4 M0.8 4.2 L2.2 3.2 M4.8 0.3 L3.6 2.6 M4.4 1.5 H8.8 L8 2.8 M6.2 2 Q6 4 3.6 5 M6.2 2.6 Q7 4.2 9.4 4.9 M2.6 5.6 H7.6 V8.2 M2.6 5.6 V8.2 M5.1 6.2 V7.6 M4.6 8 L1.8 9.8 M5.8 8 L8.8 9.8" /></svg>
<svg class="abs" style="left:789.4px;top:474.9px" width="10.4" height="10.6" viewBox="0 0 10 10" fill="none" stroke="#2b2b2b" stroke-width="1.12" stroke-linecap="square"><path d="M0.7 1.2 L1.8 2 M0.4 3.8 L1.5 4.6 M0.4 9.4 L2 6.6 M3 1 H9.6 M3.3 1 V6 Q3.2 8 2.3 9.6 M6.4 1.1 L5.9 2.4 M4.6 2.6 H8.6 V5.8 H4.6 Z M4.6 4.2 H8.6 M6.6 5.8 V9.4 L5.8 9 M5.1 7 L4.1 9 M8 7 L9.3 9" /></svg>
<svg class="abs" style="left:827.7px;top:474.9px" width="10.4" height="10.6" viewBox="0 0 10 10" fill="none" stroke="#2b2b2b" stroke-width="1.12" stroke-linecap="square"><path d="M1 9.6 V1 H9 V9.2 L8 9.6 M2.5 3 L4.6 7.6 M4.6 3 L2.5 7.6 M5.5 3 L7.6 7.6 M7.6 3 L5.5 7.6" /></svg>
<svg class="abs" style="left:839.7px;top:474.9px" width="10.4" height="10.6" viewBox="0 0 10 10" fill="none" stroke="#2b2b2b" stroke-width="1.12" stroke-linecap="square"><path d="M2.3 0.4 L2.6 1.6 M0.5 2.3 H4.3 M1.5 3.6 L1.9 7 M3.5 3.6 L2.9 7 M0.3 8.6 L4.6 7.8 M7 0.4 V4.6 M7 2.4 H9.6 M5.3 4.8 H9.2 V9.3 H5.3 Z" /></svg>
</div>
</body>
</html>
